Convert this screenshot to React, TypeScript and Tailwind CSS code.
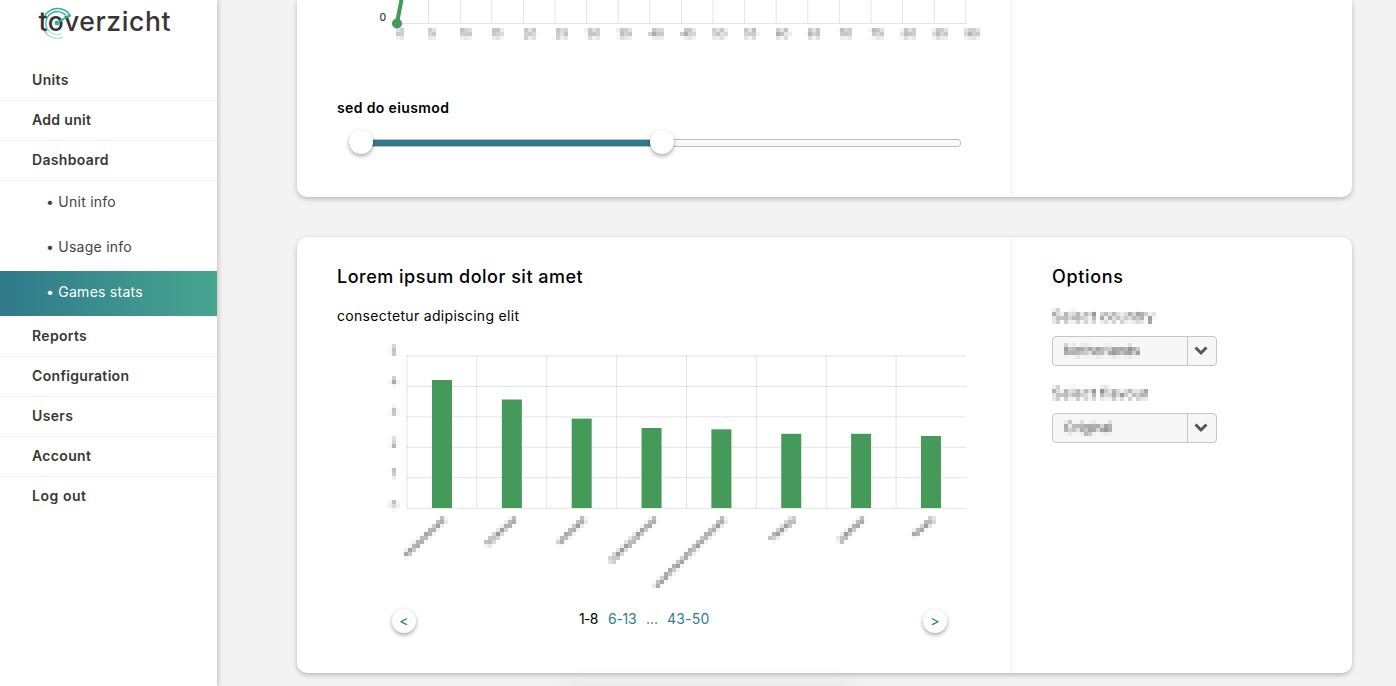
import React from "react";

const FONT = "font-[Inter,'Open_Sans',sans-serif]";

function PixelFilter() {
  return (
    <svg width="0" height="0" className="absolute" aria-hidden="true">
      <filter id="mosaic" x="-40" y="-40" width="1500" height="760" filterUnits="userSpaceOnUse" primitiveUnits="userSpaceOnUse" colorInterpolationFilters="sRGB">
        <feFlood x="1" y="1" width="1" height="1" floodColor="#000" result="dot" />
        <feOffset in="dot" dx="0" dy="0" x="0" y="0" width="4" height="4" result="cell" />
        <feTile in="cell" result="grid" />
        <feGaussianBlur in="SourceGraphic" stdDeviation="1.3" result="soft" />
        <feComposite in="soft" in2="grid" operator="in" result="s0" />
        <feOffset in="s0" dx="1" result="o1" />
        <feMerge result="s1"><feMergeNode in="s0" /><feMergeNode in="o1" /></feMerge>
        <feOffset in="s1" dx="-1" result="o2a" />
        <feOffset in="s1" dx="1" result="o2b" />
        <feMerge result="s2"><feMergeNode in="o2a" /><feMergeNode in="o2b" /></feMerge>
        <feOffset in="s2" dy="1" result="o3" />
        <feMerge result="s3"><feMergeNode in="s2" /><feMergeNode in="o3" /></feMerge>
        <feOffset in="s3" dy="-1" result="o4a" />
        <feOffset in="s3" dy="1" result="o4b" />
        <feMerge><feMergeNode in="o4a" /><feMergeNode in="o4b" /></feMerge>
      </filter>
    </svg>
  );
}

function Logo() {
  return (
    <svg width="217" height="60" viewBox="0 0 217 60" className="block">
      <defs>
        <linearGradient id="ring" x1="0" y1="0" x2="0" y2="1">
          <stop offset="0" stopColor="#2fb0a0" />
          <stop offset="0.6" stopColor="#3eb5a3" />
          <stop offset="1" stopColor="#3eb5a3" stopOpacity="0.35" />
        </linearGradient>
      </defs>
      <g fill="none" stroke="url(#ring)">
        <path d="M69.500 14.500A15 15 0 1 0 63 37.500" strokeWidth="1.500" />
        <path d="M66 15.500A11.500 11.500 0 1 0 62 33.500" strokeWidth="1.300" />
      </g>
      <text x="38.500" y="30.500" fontSize="26.500" fontWeight="540" fill="#373535" textLength="132" fontFamily="Inter">toverzicht</text>
      <path d="M57 23L69 15.500" stroke="#2fb0a0" strokeWidth="1.800" />
      <circle cx="57" cy="23" r="2.400" fill="#2fb0a0" />
      <circle cx="69.500" cy="15.500" r="1.600" fill="#2fb0a0" />
    </svg>
  );
}

const item = "flex items-center border-b border-[#f2f2f2] pb-0.5 pl-8 text-[14px] font-[560] tracking-[0.33px] text-[#383838]";
const subItem = "flex h-[45px] items-center pb-1 pl-[46px] text-[14px] tracking-[0.25px]";

function Sidebar() {
  return (
    <nav className="relative z-10 h-[686px] w-[217px] shrink-0 bg-white shadow-[1px_0_5px_rgba(0,0,0,0.22)]">
      <Logo />
      <div className={item + " h-[41px]"}>Units</div>
      <div className={item + " h-10"}>Add unit</div>
      <div className={item + " h-10"}>Dashboard</div>
      <div className={subItem + " text-[#444]"}>• Unit info</div>
      <div className={subItem + " text-[#444]"}>• Usage info</div>
      <div className={subItem + " bg-linear-to-r from-[#30798b] to-[#48a590] text-white"}>• Games stats</div>
      <div className={item + " h-[41px]"}>Reports</div>
      <div className={item + " h-10"}>Configuration</div>
      <div className={item + " h-10"}>Users</div>
      <div className={item + " h-10"}>Account</div>
      <div className="flex h-10 items-center pb-[3px] pl-8 text-[14px] font-[560] tracking-[0.55px] text-[#383838]">Log out</div>
    </nav>
  );
}

const ticks = Array.from({ length: 19 }, (_, i) => i * 5);

function LineChart() {
  return (
    <svg width="714" height="60" viewBox="297 0 714 60" className="block">
      <g stroke="#e3e3e3" strokeWidth="1">
        {ticks.map((t, i) => (
          <line key={t} x1={397 + i * 31.6} x2={397 + i * 31.6} y1="0" y2="23.5" />
        ))}
        <line x1="397" x2="967" y1="23.500" y2="23.500" />
      </g>
      <path d="M397 23.500L402.500-6" stroke="#459a5a" strokeWidth="4" />
      <circle cx="397" cy="23.500" r="5" fill="#459a5a" />
      <text x="379.500" y="21" fontSize="10.500" fill="#333" stroke="#333" strokeWidth="0.200" fontFamily="Inter">0</text>
      <g filter="url(#mosaic)" fontFamily="Inter" fontSize="11" fill="#555">
        {ticks.map((t, i) => (
          <text key={t} x={(t < 10 ? 396.5 : 396) + i * 31.6} y="37">{t}</text>
        ))}
      </g>
    </svg>
  );
}

const bars = [380, 399.5, 418.6, 428, 429.3, 433.8, 433.8, 436];
const names = [
  [444, 518, 405, 555],
  [515, 518, 486, 544],
  [584, 518, 558, 543],
  [655, 518, 610, 561],
  [724, 518, 655, 586],
  [794, 518, 770, 539],
  [863, 518, 839, 541],
  [933, 518, 913, 535],
];

function BarChart() {
  return (
    <svg width="714" height="260" viewBox="297 340 714 260" className="block">
      <g stroke="#000" strokeOpacity="0.11" strokeWidth="1">
        {[355.9, 386.4, 416.8, 447.3, 477.7, 508.3].map((y) => (
          <line key={y} x1="406.500" x2="966" y1={y} y2={y} />
        ))}
        {[0, 1, 2, 3, 4, 5, 6, 7].map((i) => (
          <line key={i} x1={407 + i * 69.87} x2={407 + i * 69.87} y1="355.500" y2="508" />
        ))}
      </g>
      {bars.map((y, i) => (
        <rect key={i} x={432 + i * 69.85} y={y} width="20" height={508 - y} fill="#459a5a" />
      ))}
      <g filter="url(#mosaic)">
        {[5, 4, 3, 2, 1, 0].map((n, i) => (
          <text key={n} x={n === 1 ? 391 : 390} y={354 + i * 30.7} fontFamily="Inter" fontSize="11" fill="#555">{n}</text>
        ))}
        {names.map(([x1, y1, x2, y2], i) => (
          <line key={i} x1={x1} y1={y1} x2={x2} y2={y2} stroke="#999" strokeWidth="5.500" strokeDasharray="5 1 7 1.500" />
        ))}
      </g>
    </svg>
  );
}

function Slider() {
  const knob = "absolute -top-[10px] size-6 rounded-full bg-white shadow-[0_2px_4px_rgba(0,0,0,0.35)]";
  return (
    <div className="relative mt-[21px] ml-[52px] h-2 w-[612px] rounded-[3px] border border-[#bfbfbf] bg-[#fafafa]">
      <div className="h-full w-[312px] bg-[#2f7a8b]" />
      <div className={knob + " -left-px"} />
      <div className={knob + " left-[300px]"} />
    </div>
  );
}

function Select({ label, value }: { label: string; value: string }) {
  return (
    <div className="h-[77px]">
      <div className="h-7 w-[140px] text-[14px] leading-4 tracking-[0.4px] text-[#333] [filter:url(#mosaic)]">{label}</div>
      <div className="flex h-[30px] w-[165px] rounded border border-[#c6c6c6] bg-[#f7f7f7]">
        <div className="w-[134px] pt-[7px] pl-[11px]">
          <div className="-mt-px h-4 text-[13px] leading-[15px] text-[#333] [filter:url(#mosaic)]">{value}</div>
        </div>
        <div className="flex flex-1 items-center justify-center border-l border-[#c6c6c6] pr-0.5 pb-px">
          <svg width="14" height="10" viewBox="0 0 14 10">
            <path d="M1.500 1.500L7 7L12.500 1.500" fill="none" stroke="#555" strokeWidth="3" />
          </svg>
        </div>
      </div>
    </div>
  );
}

function Round({ children }: { children: React.ReactNode }) {
  return <button className="flex size-6 items-center justify-center rounded-full bg-white text-[14px] leading-none text-[#2f7a8b] shadow-[0_2px_4px_rgba(0,0,0,0.35)]">{children}</button>;
}

export default function App() {
  const card = "flex w-[1055px] shrink-0 bg-white shadow-[0_2px_5px_rgba(0,0,0,0.24)]";
  return (
    <div className={"flex h-[686px] w-[1396px] overflow-hidden bg-[#f3f3f3] text-black " + FONT}>
      <PixelFilter />
      <Sidebar />
      <main className="flex flex-col pl-20">
        <section className={card + " h-[197px] rounded-b-[10px]"}>
          <div className="w-[715px] border-r border-[#f0f0f0]">
            <LineChart />
            <h3 className="mt-[38px] pl-10 text-[14px] leading-5 font-[560] tracking-[0.37px]">sed do eiusmod</h3>
            <Slider />
          </div>
        </section>
        <section className={card + " mt-10 h-[436px] rounded-[10px]"}>
          <div className="w-[715px] border-r border-[#f0f0f0]">
            <h2 className="mt-7 pl-10 text-[18px] leading-6 font-medium tracking-[0.5px]">Lorem ipsum dolor sit amet</h2>
            <p className="mt-[17px] pl-10 text-[14px] leading-5 tracking-[0.32px]">consectetur adipiscing elit</p>
            <div className="mt-[14px]"><BarChart /></div>
            <div className="mt-[9px] flex pl-[95px]">
              <Round>&lt;</Round>
              <div className="flex w-[507px] gap-2.5 pl-[163px] text-[14px] leading-5 whitespace-nowrap text-[#2f8092]">
                <span className="w-[19px] tracking-[-0.7px] text-black">1-8</span>
                <span className="w-7 tracking-[-0.3px]">6-13</span>
                <span className="w-[11px]">...</span>
                <span className="tracking-[0.2px]">43-50</span>
              </div>
              <Round>&gt;</Round>
            </div>
          </div>
          <div className="pt-7 pl-10">
            <h2 className="mb-[19px] text-[18px] leading-6 font-medium tracking-[0.65px]">Options</h2>
            <Select label="Select country" value="Netherlands" />
            <Select label="Select flavour" value="Original" />
          </div>
        </section>
        <div className="mt-[22px] ml-[265px] h-5 w-[295px] shrink-0 shadow-[0_0_30px_rgba(0,0,0,0.14)]" />
      </main>
    </div>
  );
}
